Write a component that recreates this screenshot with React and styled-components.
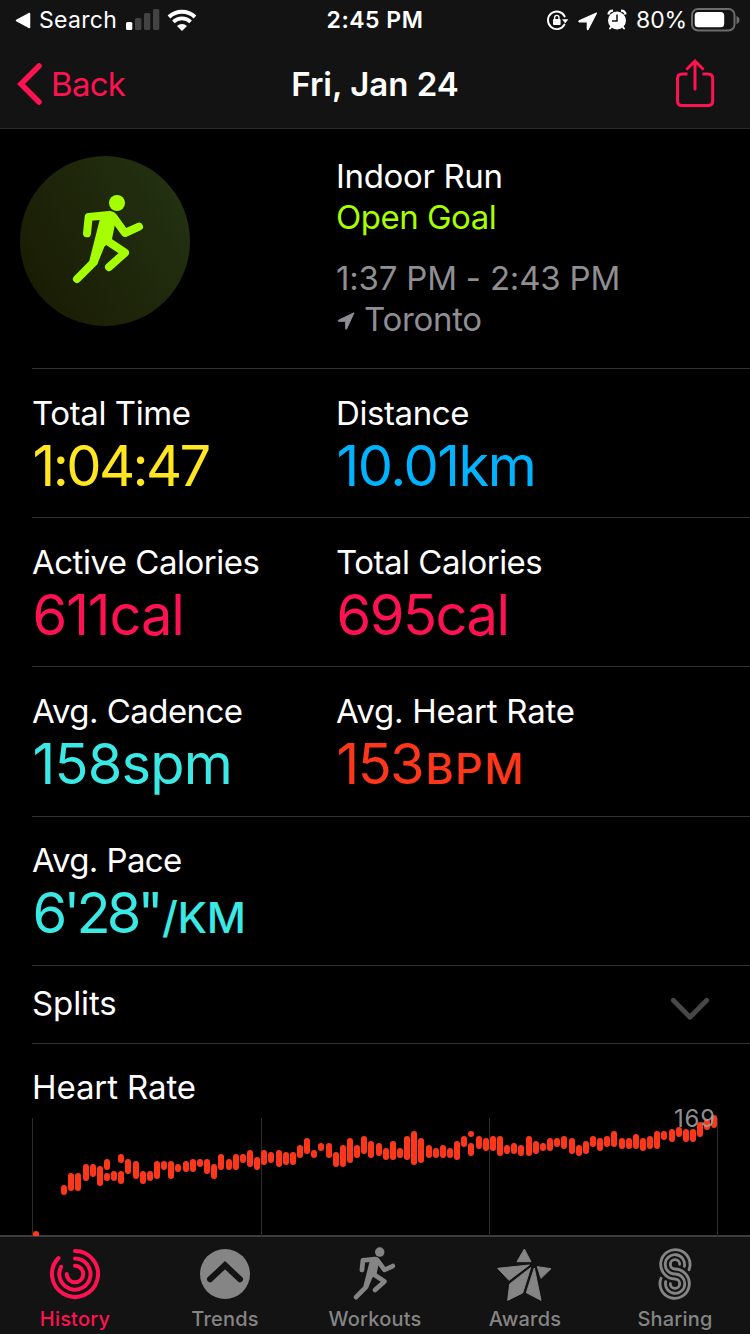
import React from 'react';
import styled, { createGlobalStyle } from 'styled-components';

const PINK = '#ff1252';
const BAR = '#131313';
const LINE = '#323234';
const GREY = '#8e8e93';
const TAB_GREY = '#858585';

const stats = [
    [
        { label: 'Total Time', tracking: -0.4, value: '1:04:47', color: '#ffe620', spacing: -2.6 },
        { label: 'Distance', tracking: -0.4, value: '10.01km', color: '#00b3ff', spacing: -1.5 },
    ],
    [
        { label: 'Active Calories', tracking: -0.5, value: '611cal', color: PINK, spacing: -1.1 },
        { label: 'Total Calories', tracking: -0.5, value: '695cal', color: PINK, spacing: -1.5 },
    ],
    [
        { label: 'Avg. Cadence', tracking: -0.55, value: '158spm', color: '#3ae8e4', spacing: -0.8 },
        { label: 'Avg. Heart Rate', tracking: -0.25, value: '153', unit: 'BPM', color: '#ff371a', spacing: -1.6, unitSpacing: 1.7 },
    ],
    [
        { label: 'Avg. Pace', tracking: -0.6, value: '6\'28"', unit: '/KM', color: '#3ae8e4', spacing: -3.8, unitSpacing: -0.3 },
    ],
];

// [x, top, bottom]
const beats = [
    [36, 121, 132], [64, 75, 85], [71, 63, 81], [78, 63, 81], [86, 54, 71], [93, 54, 67], [100, 56, 76],
    [107, 49, 60], [107, 63, 71], [114, 61, 71], [121, 44, 53], [121, 61, 74], [128, 49, 64],
    [136, 51, 69], [143, 61, 74], [150, 61, 71], [157, 51, 69], [164, 51, 60], [171, 51, 69], [178, 54, 62],
    [186, 51, 62], [193, 49, 62], [200, 49, 57], [207, 49, 64], [214, 54, 69], [221, 44, 60],
    [229, 49, 60], [236, 44, 60], [243, 44, 53], [250, 40, 57], [257, 47, 60], [264, 40, 55], [271, 42, 53],
    [279, 40, 57], [286, 42, 55], [293, 42, 55], [300, 35, 48], [307, 28, 44], [314, 40, 48], [321, 33, 41],
    [329, 33, 48], [336, 42, 57], [343, 35, 57], [350, 28, 53], [357, 35, 48], [364, 26, 44], [371, 31, 48],
    [379, 33, 46], [386, 38, 50], [393, 31, 50], [400, 38, 48], [407, 26, 50], [414, 21, 55], [421, 28, 53],
    [429, 35, 48], [436, 38, 48], [443, 35, 48], [450, 38, 48], [457, 31, 50], [464, 26, 37],
    [471, 21, 27], [471, 33, 46], [479, 26, 39], [486, 28, 41], [493, 26, 41], [500, 26, 46], [507, 35, 44],
    [514, 33, 44], [521, 35, 46], [529, 26, 46], [536, 31, 44], [543, 33, 41], [550, 28, 41], [557, 28, 37],
    [564, 26, 39], [572, 28, 44], [579, 35, 46], [586, 31, 44], [593, 26, 37], [600, 28, 41], [607, 26, 37],
    [614, 21, 37], [622, 28, 39], [629, 28, 39], [636, 24, 39], [643, 28, 41], [650, 26, 39], [657, 21, 39],
    [664, 21, 30], [672, 19, 32], [679, 17, 27], [686, 19, 32], [693, 19, 32], [700, 12, 27], [707, 9, 20],
    [714, 5, 18],
];

const RunnerShape = () => (
    <g fill="none" stroke="currentColor" strokeWidth="24" strokeLinecap="round" strokeLinejoin="round">
        <circle cx="351" cy="189" r="24" fill="currentColor" stroke="none"/>
        <path d="M261 280L266 231L328 225Q336 225 341 232L375 279L417 260"/>
        <path d="M302 228H350L336 297L313 320L291 375L268 362Z" fill="currentColor" stroke="none"/>
        <path d="M324 304L375 338L327 381"/>
        <path d="M280 368L231 417"/>
    </g>
)

const StatusLeft = () => (
    <StatusGroup>
        <svg width="18" height="18" viewBox="0 0 18 18">
            <path d="M2.500 9.500L15.500 2.500V16.500Z" fill="#fff" stroke="#fff" strokeWidth="1.500" strokeLinejoin="round"/>
        </svg>
        <StatusText $left={7} $width={87}>Search</StatusText>
        <svg width="34" height="22" viewBox="0 0 34 22">
            <rect x="0" y="13" width="6.300" height="8" rx="1.500" fill="#fff"/>
            <rect x="9" y="9" width="6.300" height="12" rx="1.500" fill="#434343"/>
            <rect x="18" y="4" width="6.300" height="17" rx="1.500" fill="#434343"/>
            <rect x="27" y="0" width="6.300" height="21" rx="1.500" fill="#434343"/>
        </svg>
        <WifiIcon width="30" height="22" viewBox="0 0 30 22">
            <path d="M2 8A19 19 0 0 1 28 8" fill="none" stroke="#fff" strokeWidth="4"/>
            <path d="M6.400 12.900A12.200 12.200 0 0 1 23.600 12.900" fill="none" stroke="#fff" strokeWidth="3.600"/>
            <path d="M10 17A7.200 7.200 0 0 1 20 17L15 22Z" fill="#fff"/>
        </WifiIcon>
    </StatusGroup>
)

const StatusRight = () => (
    <StatusGroup>
        <svg width="24" height="24" viewBox="0 0 24 24">
            <path d="M19.700 8.500A8.800 8.800 0 1 0 19.500 16.500" fill="none" stroke="#fff" strokeWidth="1.900" strokeLinecap="round"/>
            <path d="M17 11.200H23.400L20.200 15.200Z" fill="#fff"/>
            <rect x="8" y="11" width="7.600" height="6" rx="1" fill="#fff"/>
            <path d="M9.600 11.500V9.600A2.200 2.200 0 0 1 14 9.600V11.500" fill="none" stroke="#fff" strokeWidth="1.400"/>
        </svg>
        <svg width="35" height="24" viewBox="0 0 35 24">
            <path d="M27.500 5L19 21.500Q18.400 21.900 18.300 21.100V13.800H10.300Q9.400 13.400 10.200 12.900Z" fill="#fff" stroke="#fff" strokeWidth="1.200" strokeLinejoin="round"/>
        </svg>
        <svg width="24" height="24" viewBox="0 0 24 24">
            <circle cx="13" cy="12.500" r="9" fill="#fff"/>
            <path d="M4.500 6.500A4.500 4.500 0 0 1 9 2.600M21.500 6.500A4.500 4.500 0 0 0 17 2.600" stroke="#fff" strokeWidth="2.400" fill="none"/>
            <path d="M7.500 18.500L6 20.500M18.500 18.500L20 20.500" stroke="#fff" strokeWidth="2" strokeLinecap="round"/>
            <path d="M13 6.500V13H8" stroke={BAR} strokeWidth="1.500" fill="none"/>
        </svg>
        <StatusText $left={8} $width={55} $spacing={-0.1}>80%</StatusText>
        <svg width="50" height="24" viewBox="0 0 50 24">
            <rect x="1" y="1" width="42.500" height="21.500" rx="6" fill="none" stroke="#6c6c6c" strokeWidth="2"/>
            <rect x="3.700" y="4" width="29.500" height="15.200" rx="3.500" fill="#fff"/>
            <path d="M45.500 8Q48.500 9 48.500 12T45.500 16Z" fill="#6c6c6c"/>
        </svg>
    </StatusGroup>
)

const HistoryIcon = () => (
    <svg width="54" height="54" viewBox="-27 -27 54 54" fill="none" stroke="currentColor" strokeWidth="4" strokeLinecap="round">
        <path d="M0 -23A23 23 0 1 1 -16.500 -16"/>
        <path d="M0 -15.600A15.600 15.600 0 1 1 -13.900 -7.200"/>
        <path d="M0 -8.300A8.300 8.300 0 1 1 -8.300 0"/>
    </svg>
)

const TrendsIcon = () => (
    <svg width="54" height="54" viewBox="-27 -27 54 54">
        <circle r="25" fill="currentColor"/>
        <path d="M-15 5.300L0 -8.800L15 5.300" fill="none" stroke={BAR} strokeWidth="6" strokeLinecap="round"/>
    </svg>
)

const WorkoutsIcon = () => (
    <svg width="54" height="54" viewBox="-27 -27 54 54">
        <g transform="translate(-64.600 -59.300) scale(.1975)"><RunnerShape/></g>
    </svg>
)

const AwardsIcon = () => (
    <svg width="54" height="54" viewBox="368 52 162 162" fill="currentColor" stroke="currentColor" strokeWidth="3" strokeLinejoin="round" overflow="visible">
        <path d="M447 58L467 96H425Z"/>
        <path d="M367 116L462 106L401 152Z"/>
        <path d="M466 114L442 190L397 212L403 163Z"/>
        <path d="M477 115L497 212L453 189Z"/>
        <path d="M486 111L527 117L497 146Z"/>
    </svg>
)

const SharingIcon = () => (
    <svg width="54" height="54" viewBox="819 51 162 162" fill="none" stroke="currentColor" strokeWidth="8.500" strokeLinecap="round">
        <path d="M942 119A44 44 0 1 0 900 147A14 14 0 1 1 886 161"/>
        <path d="M928 109A29 29 0 1 0 900 132A29 29 0 1 1 872 155"/>
        <path d="M914 103A14 14 0 1 0 900 117A44 44 0 1 1 858 145"/>
    </svg>
)

const tabs = [
    { name: 'History', icon: <HistoryIcon/>, active: true },
    { name: 'Trends', icon: <TrendsIcon/> },
    { name: 'Workouts', icon: <WorkoutsIcon/> },
    { name: 'Awards', icon: <AwardsIcon/> },
    { name: 'Sharing', icon: <SharingIcon/> },
];

const HeartChart = () => (
    <ChartWrapper>
        <svg width="750" height="126" viewBox="0 0 750 126">
            {[32.5, 261.5, 489.5, 717.5].map(x => (
                <path key={x} d={`M${x} 8V126`} stroke="#2c2c2e"/>
            ))}
            {beats.map(([x, top, bottom]) => (
                <rect key={`${x}-${top}`} x={x - 3} y={top} width="6" height={bottom - top} rx="3" fill="#ff371a"/>
            ))}
        </svg>
        <MaxRate>169</MaxRate>
    </ChartWrapper>
)

const Stat = ({ label, tracking, value, unit, color, spacing, unitSpacing }) => (
    <div>
        <Line $spacing={tracking}>{label}</Line>
        <Value $color={color} $spacing={spacing}>
            {value}{unit && <Unit $spacing={unitSpacing}>{unit}</Unit>}
        </Value>
    </div>
)

const App = () => {
    return (
        <Screen>
            <GlobalStyle/>
            <Header>
                <StatusBar>
                    <StatusLeft/>
                    <Clock>2:45 PM</Clock>
                    <StatusRight/>
                </StatusBar>
                <NavBar>
                    <BackLink>
                        <svg width="30" height="46" viewBox="0 0 30 46">
                            <path d="M24 5L6 23L24 41" fill="none" stroke="currentColor" strokeWidth="5.500" strokeLinecap="round"/>
                        </svg>
                        Back
                    </BackLink>
                    <Title>Fri, Jan 24</Title>
                    <ShareButton>
                        <svg width="40" height="50" viewBox="0 1 40 50" fill="none" stroke="currentColor" strokeWidth="3" strokeLinecap="round">
                            <path d="M12.500 16H7Q2.500 16 2.500 20.500V43Q2.500 47.500 7 47.500H33Q37.700 47.500 37.700 43V20.500Q37.700 16 33 16H27.500" strokeLinecap="butt"/>
                            <path d="M20 31V3M12.300 10.700L20 3L27.700 10.700"/>
                        </svg>
                    </ShareButton>
                </NavBar>
            </Header>

            <Summary>
                <Badge>
                    <svg width="170" height="170" viewBox="60 48 510 510"><RunnerShape/></svg>
                </Badge>
                <div>
                    <Line $spacing={-0.35}>Indoor Run</Line>
                    <Line $spacing={-0.5} $color="#a6ff00">Open Goal</Line>
                    <Line $spacing={-0.2} $color={GREY} $top={20}>1:37 PM - 2:43 PM</Line>
                    <Line $spacing={-0.3} $color={GREY}>
                        <svg width="28" height="20" viewBox="-1 -1 28 20">
                            <path d="M17 1.800L9.600 18Q9 18.800 8.700 17.900V10.300H1.500Q.7 9.800 1.500 9.200Z" fill="currentColor" stroke="currentColor" strokeWidth="1" strokeLinejoin="round"/>
                        </svg>
                        Toronto
                    </Line>
                </div>
            </Summary>

            <StatRow>
                {stats[0].map(stat => <Stat key={stat.label} {...stat}/>)}
            </StatRow>
            <StatRow>
                {stats[1].map(stat => <Stat key={stat.label} {...stat}/>)}
            </StatRow>
            <StatRow $height={150}>
                {stats[2].map(stat => <Stat key={stat.label} {...stat}/>)}
            </StatRow>
            <StatRow $padding={23}>
                {stats[3].map(stat => <Stat key={stat.label} {...stat}/>)}
            </StatRow>

            <SplitsRow>
                <Line $spacing={-0.1}>Splits</Line>
                <SplitsChevron width="40" height="26" viewBox="0 0 40 26">
                    <path d="M3.300 4.300L20 21.300L36.700 4.300" fill="none" stroke="#48484a" strokeWidth="4.800" strokeLinecap="round" strokeLinejoin="round"/>
                </SplitsChevron>
            </SplitsRow>

            <HeartSection>
                <Line $spacing={-0.1}>Heart Rate</Line>
                <HeartChart/>
            </HeartSection>

            <TabBar>
                {tabs.map(tab => (
                    <Tab key={tab.name} $active={tab.active}>
                        {tab.icon}
                        <span>{tab.name}</span>
                    </Tab>
                ))}
            </TabBar>
        </Screen>
    )
}

export default App


const GlobalStyle = createGlobalStyle`
    body {
        margin: 0;
        background: #000;
    }

    svg {
        display: block;
        flex-shrink: 0;
    }
`

const Screen = styled.div`
    width: 750px;
    height: 1334px;
    display: flex;
    flex-direction: column;
    overflow: hidden;
    background: #000;
    color: #fff;
    font-family: Inter, "Liberation Sans", sans-serif;
`

const Header = styled.header`
    flex: none;
    height: 128px;
    background: ${BAR};
    border-bottom: 1px solid #2a2a2c;
`

const StatusBar = styled.div`
    height: 40px;
    padding: 0 14px;
    display: grid;
    grid-template-columns: 1fr auto 1fr;
    align-items: center;

    > :last-child {
        justify-self: end;
        margin-right: -5px;
    }
`

const StatusGroup = styled.div`
    display: flex;
    align-items: center;
`

const StatusText = styled.span`
    box-sizing: border-box;
    width: ${p => p.$width + p.$left}px;
    padding-left: ${p => p.$left}px;
    font-size: 23px;
    letter-spacing: ${p => p.$spacing || 0.3}px;
`

const WifiIcon = styled.svg`
    margin-left: 7px;
`

const Clock = styled.span`
    font-size: 23px;
    font-weight: 600;
    letter-spacing: 0.5px;
`

const NavBar = styled.nav`
    height: 88px;
    padding: 0 15px;
    display: grid;
    grid-template-columns: 1fr auto 1fr;
    align-items: center;
`

const BackLink = styled.a`
    display: flex;
    align-items: center;
    gap: 6px;
    color: ${PINK};
    font-size: 33px;
    letter-spacing: -0.7px;
`

const Title = styled.h1`
    margin: 0;
    font-size: 33px;
    font-weight: 600;
`

const ShareButton = styled.span`
    justify-self: end;
    margin-right: 20px;
    color: ${PINK};
`

const Summary = styled.section`
    box-sizing: border-box;
    flex: none;
    height: 240px;
    margin-left: 32px;
    display: grid;
    grid-template-columns: 304px 1fr;
    padding-top: 27px;
    border-bottom: 1px solid ${LINE};
`

const Badge = styled.div`
    width: 170px;
    height: 170px;
    margin-left: -12px;
    border-radius: 50%;
    background: linear-gradient(60deg, #191c03 10%, #243213 95%);
    color: #a6ff00;
`

const Line = styled.div`
    display: flex;
    align-items: center;
    height: 41px;
    margin-top: ${p => p.$top || 0}px;
    line-height: 41px;
    font-size: 33px;
    letter-spacing: ${p => p.$spacing || 0}px;
    color: ${p => p.$color || '#fff'};
    white-space: pre;
`

const StatRow = styled.section`
    box-sizing: border-box;
    flex: none;
    height: ${p => p.$height || 149}px;
    margin-left: 32px;
    padding-top: ${p => p.$padding || 24}px;
    display: grid;
    grid-template-columns: 304px 1fr;
    border-bottom: 1px solid ${LINE};
`

const Value = styled.div`
    height: 64px;
    padding-left: 0.5px;
    line-height: 64px;
    font-size: 56px;
    letter-spacing: ${p => p.$spacing}px;
    color: ${p => p.$color};
    white-space: nowrap;
`

const Unit = styled.span`
    margin-left: 2px;
    font-size: 43px;
    font-weight: 500;
    letter-spacing: ${p => p.$spacing}px;
`

const SplitsRow = styled.section`
    box-sizing: border-box;
    flex: none;
    height: 78px;
    margin-left: 32px;
    padding: 0 40px 2px 0;
    display: flex;
    align-items: center;
    justify-content: space-between;
    border-bottom: 1px solid ${LINE};
`

const SplitsChevron = styled.svg`
    margin-top: 11px;
`

const HeartSection = styled.section`
    flex: 1;
    min-height: 0;
    padding: 23px 0 0 32px;
`

const ChartWrapper = styled.div`
    position: relative;
    margin: 2px 0 0 -32px;
`

const MaxRate = styled.span`
    position: absolute;
    top: -6px;
    right: 34px;
    font-size: 24px;
    letter-spacing: 0.8px;
    color: rgba(160, 160, 166, 0.9);
`

const TabBar = styled.footer`
    box-sizing: border-box;
    flex: none;
    height: 99px;
    display: grid;
    grid-template-columns: repeat(5, 1fr);
    background: ${BAR};
    border-top: 2px solid #3d3d3f;
`

const Tab = styled.a`
    display: flex;
    flex-direction: column;
    align-items: center;
    padding-top: 10px;
    color: ${p => p.$active ? PINK : TAB_GREY};
    font-size: 20px;
    font-weight: 500;
    letter-spacing: 0.2px;

    span {
        margin-top: 6px;
    }
`
